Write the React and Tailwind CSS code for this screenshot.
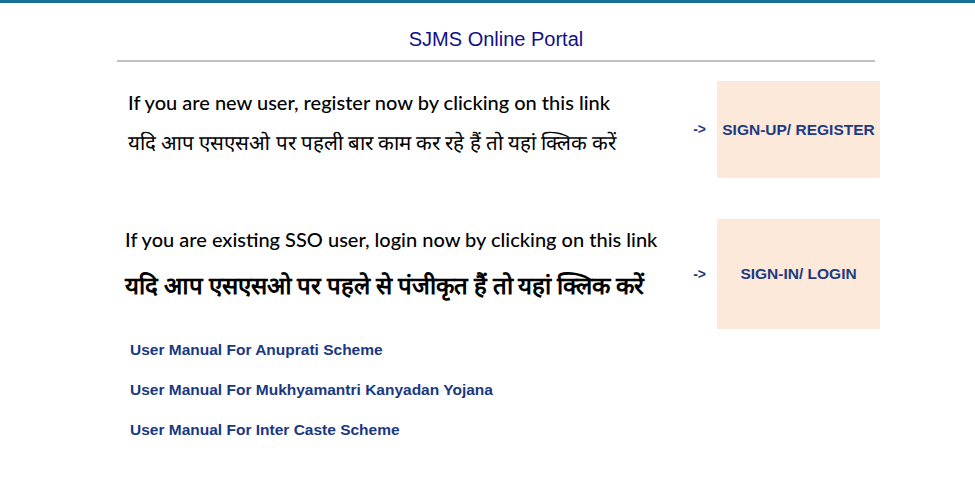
export default function App() {
  const calibri = { fontFamily: 'Lato, "Open Sans", sans-serif' }
  return (
    <div className="min-h-screen bg-white border-t-[3px] border-[#1a6f96]" style={{ fontFamily: '"Liberation Sans", Arial, sans-serif' }}>
      <div className="ml-[117px] w-[758px]">
        <h1 className="pt-[23px] text-center text-[20px] leading-[26px] text-[#10108a]">SJMS Online Portal</h1>
        <div className="mt-[8px] h-[2px] bg-[#c0c0c0]" />

        {/* Register row */}
        <div className="mt-[19px] flex -mr-[5px]">
          <div className="flex-1 pl-[11px] pt-[7px] text-black" style={calibri}>
            <p className="text-[20px] leading-[28px] font-medium">If you are new user, register now by clicking on this link</p>
            <p className="mt-[12px] text-[20.5px] leading-[28px] font-medium">यदि आप एसएसओ पर पहली बार काम कर रहे हैं तो यहां क्लिक करें</p>
          </div>
          <div className="flex items-center text-[14px] font-bold text-[#1c3b82] mr-[11px]">-&gt;</div>
          <a href="#" className="w-[163px] h-[97px] bg-[#fde9d9] flex items-center justify-center text-[15.5px] font-bold text-[#1c3b82]">
            SIGN-UP/ REGISTER
          </a>
        </div>

        {/* Login row */}
        <div className="mt-[41px] flex -mr-[5px]">
          <div className="flex-1 pl-[8px] pt-[6px] text-black" style={calibri}>
            <p className="text-[20px] leading-[28px] font-medium">If you are existing SSO user, login now by clicking on this link</p>
            <p className="mt-[17px] text-[24px] leading-[30px] font-bold">यदि आप एसएसओ पर पहले से पंजीकृत हैं तो यहां क्लिक करें</p>
          </div>
          <div className="flex items-center text-[14px] font-bold text-[#1c3b82] mr-[11px]">-&gt;</div>
          <a href="#" className="w-[163px] h-[110px] bg-[#fde9d9] flex items-center justify-center text-[15.5px] font-bold text-[#1c3b82]">
            SIGN-IN/ LOGIN
          </a>
        </div>

        <div className="mt-[12px] pl-[13px] flex flex-col gap-[23px] text-[15.5px] leading-[17px] font-bold text-[#1a3882]">
          <a href="#">User Manual For Anuprati Scheme</a>
          <a href="#">User Manual For Mukhyamantri Kanyadan Yojana</a>
          <a href="#">User Manual For Inter Caste Scheme</a>
        </div>
      </div>
    </div>
  )
}
